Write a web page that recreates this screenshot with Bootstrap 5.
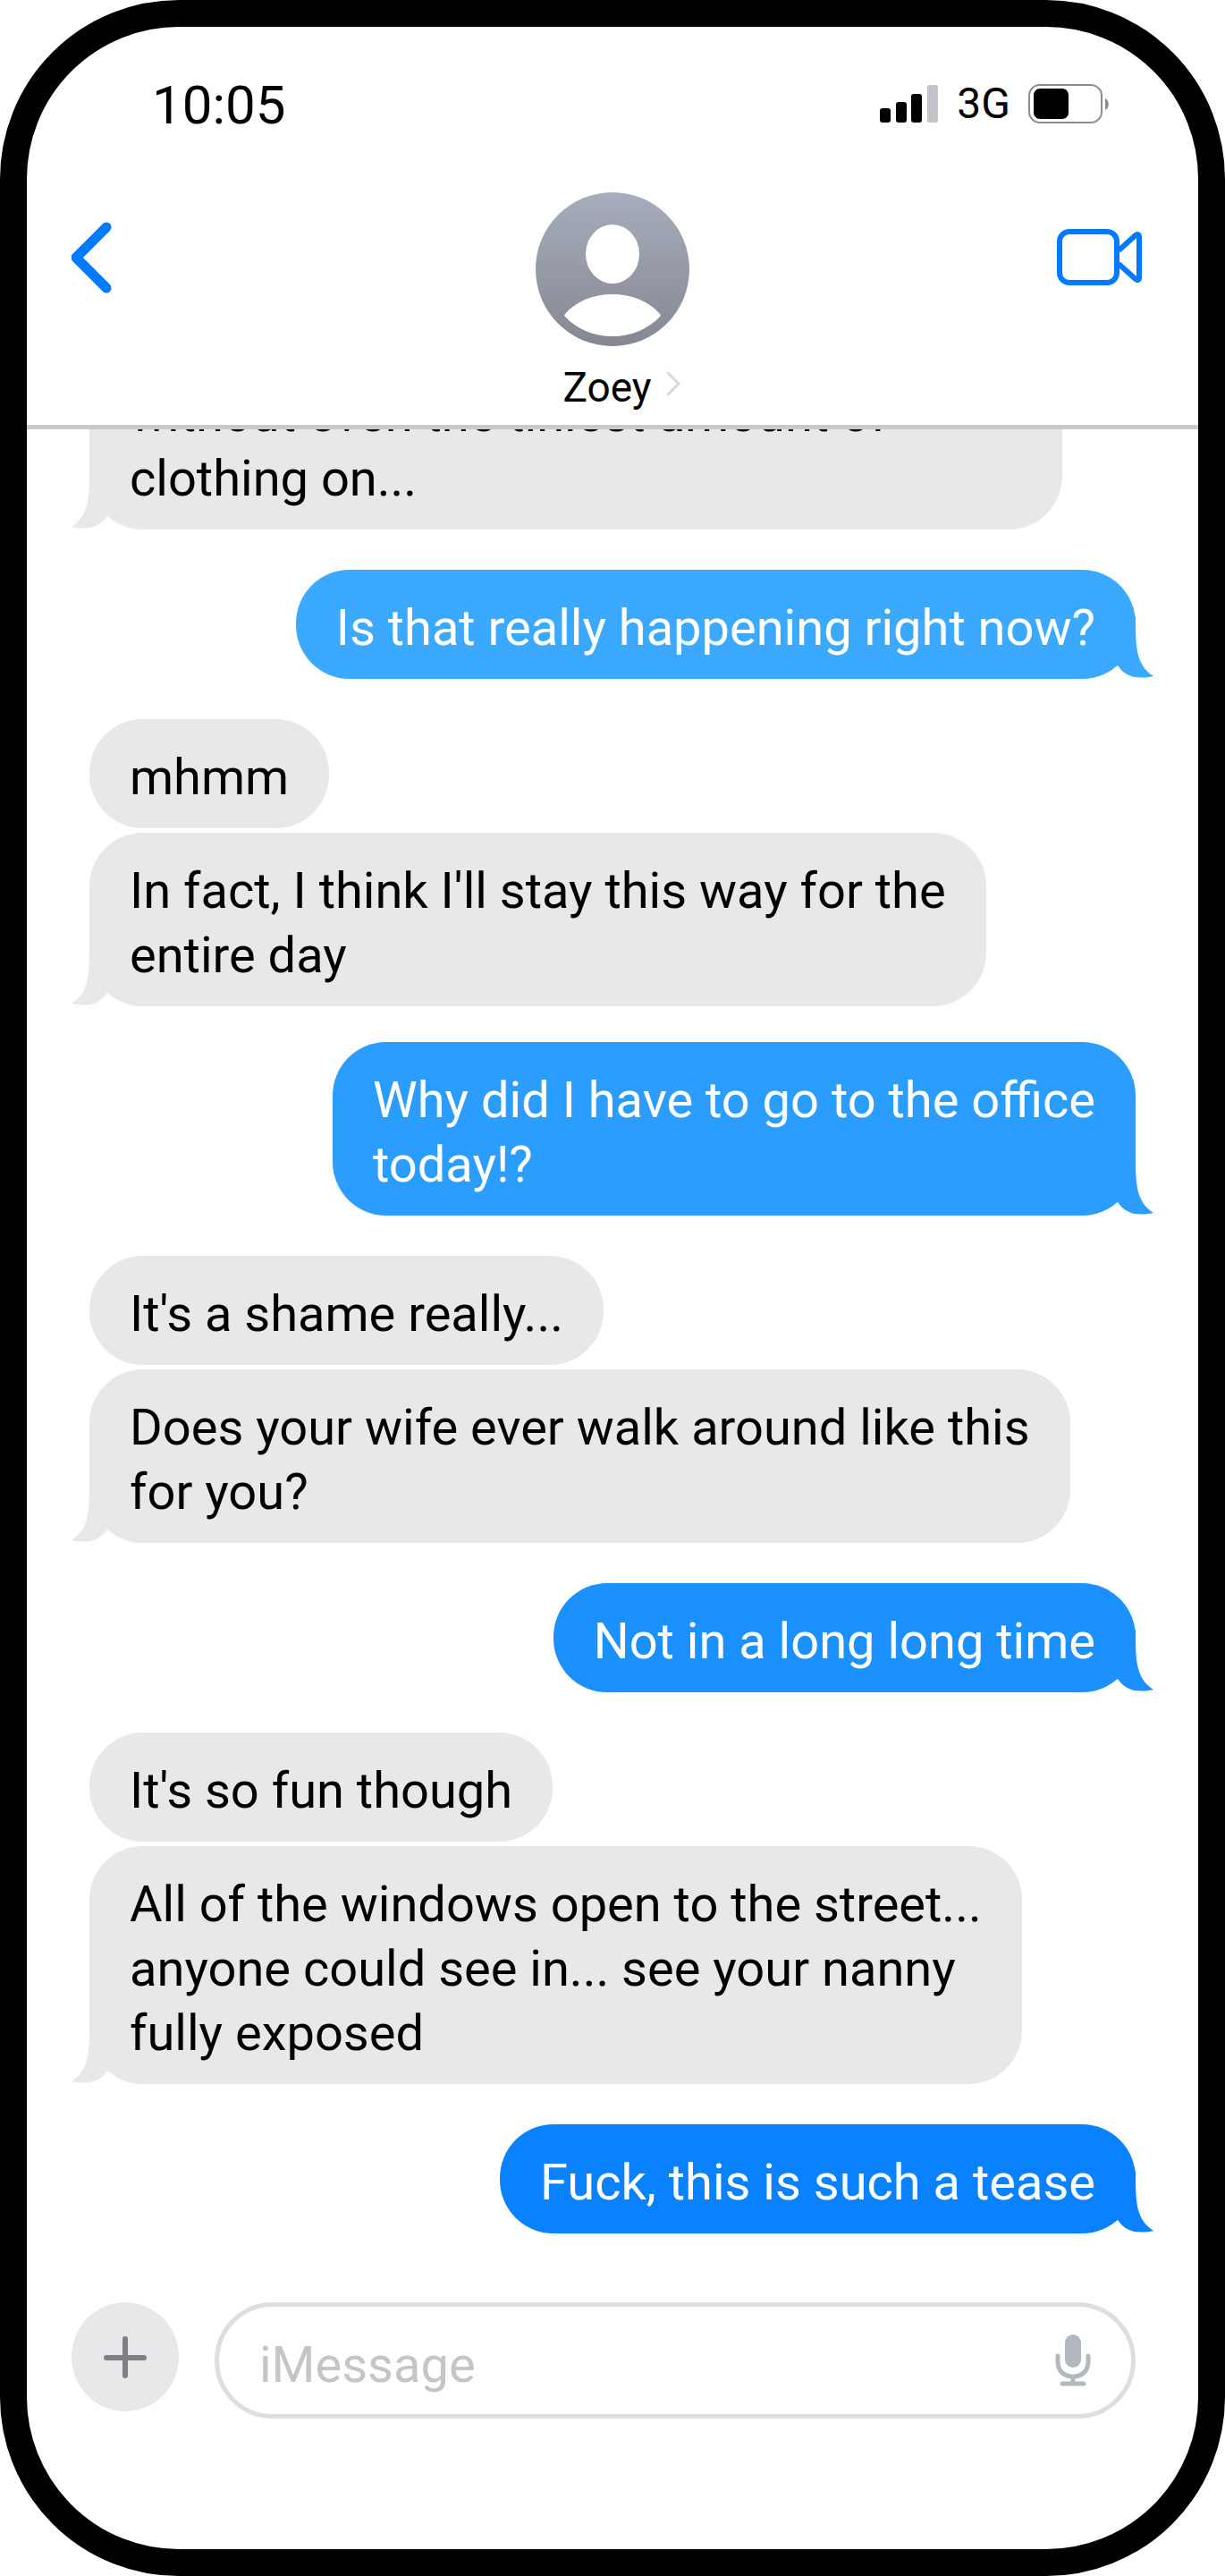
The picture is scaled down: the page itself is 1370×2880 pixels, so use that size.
<!DOCTYPE html>
<html lang="en">
<head>
<meta charset="utf-8">
<meta name="viewport" content="width=device-width, initial-scale=1">
<title>Zoey</title>
<link href="https://cdn.jsdelivr.net/npm/bootstrap@5.3.0/dist/css/bootstrap.min.css" rel="stylesheet">
<style>
  body { font-family: Roboto, "Liberation Sans", sans-serif; color: #000; background: #fff; }
  .phone { height: 100vh; border: 30px solid #000; border-radius: 200px; background: #fff; }
  svg { display: block; }

  .phone-top { padding: 58px 50px 14px; border-bottom: 5px solid #cacaca; }
  .status-row { padding: 0 50px 0 90px; line-height: 60px; }
  .clock { font-size: 60px; }
  .network { font-size: 48px; line-height: 44px; }
  .nav-row { margin-top: 67px; }
  .side-btn { padding: 33px 0 0; }
  .contact-name { margin-top: 18px; padding-left: 20px; font-size: 46px; line-height: 56px; gap: 16px; }

  .thread { min-height: 0; padding: 0 70px 77px; }
  .bubble { position: relative; padding: 29px 45px 21px; border-radius: 60px; font-size: 56px; line-height: 72px; max-width: 95%; flex-shrink: 0; }
  .bubble-in { background: #e8e8ea; align-self: flex-start; }
  .bubble-out { color: #fff; background: var(--shade); align-self: flex-end; }
  .bubble-wide { width: 93%; }
  .bubble + .bubble { margin-top: 45px; }
  .bubble-in + .bubble-in { margin-top: 5px; }
  .bubble-in + .bubble-out.two-line { margin-top: 40px; }
  .shade-1 { --shade: #3aa9ff; }
  .shade-2 { --shade: #2b9dff; }
  .shade-3 { --shade: #1b90ff; }
  .shade-4 { --shade: #0a81ff; }
  .tail { position: absolute; bottom: 0; width: 60px; height: 70px; }
  .bubble-in .tail { left: -20px; transform: scaleX(-1); fill: #e8e8ea; }
  .bubble-out .tail { right: -20px; fill: var(--shade); }

  .composer { padding: 0 70px 146px 50px; gap: 40px; }
  .message-box { height: 130px; border: 5px solid #dedede; border-radius: 65px; padding: 0 44px 0 45px; }
  .message-box input { font-size: 56px; line-height: 72px; padding: 10px 0 0; color: #000; }
  .message-box input::placeholder { color: #c5c5c7; opacity: 1; }
</style>
</head>
<body>
<main class="phone d-flex flex-column overflow-hidden">
  <header class="phone-top flex-shrink-0">
    <div class="status-row d-flex justify-content-between align-items-center">
      <span class="clock">10:05</span>
      <div class="d-flex align-items-center mb-1">
        <svg width="66" height="44" viewBox="0 0 66 44" role="img" aria-label="Signal strength">
          <rect x="0" y="27" width="12" height="16" rx="3"/>
          <rect x="18" y="20" width="12" height="23" rx="3"/>
          <rect x="35" y="11" width="12" height="32" rx="3"/>
          <rect x="53" y="1" width="12" height="42" rx="3" fill="#c4c3c9"/>
        </svg>
        <span class="network mx-3 px-1">3G</span>
        <svg width="90" height="44" viewBox="0 0 90 44" role="img" aria-label="Battery half full">
          <rect x="1" y="1" width="81" height="42" rx="12" fill="none" stroke="#8d8d8d" stroke-width="2"/>
          <rect x="6" y="5" width="39" height="34" rx="7"/>
          <path d="M86 16c5 2 5 11 0 13z" fill="#8d8d8d"/>
        </svg>
      </div>
    </div>
    <div class="nav-row d-flex align-items-start">
      <div class="col">
        <button type="button" class="btn side-btn border-0" aria-label="Back">
          <svg width="46" height="80" viewBox="0 0 46 80" fill="none" stroke="#007aff" stroke-width="11" stroke-linecap="round" stroke-linejoin="round"><path d="M39 6 5 40l34 34"/></svg>
        </button>
      </div>
      <div class="d-flex flex-column align-items-center">
        <svg width="172" height="172" viewBox="0 0 172 172" aria-hidden="true">
          <defs><linearGradient id="grey" x1="0" y1="0" x2="0" y2="1"><stop offset="0" stop-color="#a6adbb"/><stop offset="1" stop-color="#858892"/></linearGradient></defs>
          <circle cx="86" cy="86" r="86" fill="url(#grey)"/>
          <ellipse cx="86" cy="69" rx="30" ry="33" fill="#fff"/>
          <path d="M86 114c22 0 41 8 53 22 1 1 1 2 0 3-13 14-32 22-53 22s-40-8-53-22c-1-1-1-2 0-3 12-14 31-22 53-22z" fill="#fff"/>
        </svg>
        <a href="#" class="contact-name d-flex align-items-center text-decoration-none text-black">Zoey
          <svg width="16" height="28" viewBox="0 0 16 28" fill="none" stroke="#d9d9d9" stroke-width="3" stroke-linecap="round" stroke-linejoin="round" class="mb-2"><path d="M2 2l12 12L2 26"/></svg>
        </a>
      </div>
      <div class="col d-flex justify-content-end">
        <button type="button" class="btn side-btn border-0" aria-label="Video call">
          <svg width="108" height="80" viewBox="0 0 108 80" fill="none" stroke="#007aff" stroke-width="6" stroke-linejoin="round"><rect x="3" y="11" width="64" height="57" rx="11"/><path d="M69 32 88 15c2-2 4-1 4 2v45c0 3-2 4-4 2L69 47"/></svg>
        </button>
      </div>
    </div>
  </header>

  <section class="thread d-flex flex-column justify-content-end flex-grow-1 overflow-hidden" aria-label="Messages">
    <div class="bubble bubble-in bubble-wide">without even the tiniest amount of<br>clothing on...<svg class="tail" viewBox="0 0 60 70"><path d="M40 0C40 34 40 54 60 67 45 70 30 70 20 55V0z"/></svg></div>
    <div class="bubble bubble-out shade-1">Is that really happening right now?<svg class="tail" viewBox="0 0 60 70"><path d="M40 0C40 34 40 54 60 67 45 70 30 70 20 55V0z"/></svg></div>
    <div class="bubble bubble-in">mhmm</div>
    <div class="bubble bubble-in">In fact, I think I'll stay this way for the<br>entire day<svg class="tail" viewBox="0 0 60 70"><path d="M40 0C40 34 40 54 60 67 45 70 30 70 20 55V0z"/></svg></div>
    <div class="bubble bubble-out two-line shade-2">Why did I have to go to the office<br>today!?<svg class="tail" viewBox="0 0 60 70"><path d="M40 0C40 34 40 54 60 67 45 70 30 70 20 55V0z"/></svg></div>
    <div class="bubble bubble-in">It's a shame really...</div>
    <div class="bubble bubble-in">Does your wife ever walk around like this<br>for you?<svg class="tail" viewBox="0 0 60 70"><path d="M40 0C40 34 40 54 60 67 45 70 30 70 20 55V0z"/></svg></div>
    <div class="bubble bubble-out shade-3">Not in a long long time<svg class="tail" viewBox="0 0 60 70"><path d="M40 0C40 34 40 54 60 67 45 70 30 70 20 55V0z"/></svg></div>
    <div class="bubble bubble-in">It's so fun though</div>
    <div class="bubble bubble-in">All of the windows open to the street...<br>anyone could see in... see your nanny<br>fully exposed<svg class="tail" viewBox="0 0 60 70"><path d="M40 0C40 34 40 54 60 67 45 70 30 70 20 55V0z"/></svg></div>
    <div class="bubble bubble-out shade-4">Fuck, this is such a tease<svg class="tail" viewBox="0 0 60 70"><path d="M40 0C40 34 40 54 60 67 45 70 30 70 20 55V0z"/></svg></div>
  </section>

  <form class="composer d-flex align-items-start flex-shrink-0">
    <button type="button" class="btn p-0 border-0 rounded-circle" aria-label="Add attachment">
      <svg width="120" height="122" viewBox="0 0 120 122"><ellipse cx="60" cy="61" rx="60" ry="61" fill="#e6e8ea"/><path d="M60 41v41M39 62h42" stroke="#7f8083" stroke-width="6" stroke-linecap="round"/></svg>
    </button>
    <div class="message-box d-flex align-items-center flex-grow-1">
      <label for="message" class="visually-hidden">Message</label>
      <input id="message" type="text" class="form-control border-0 shadow-none bg-transparent" placeholder="iMessage">
      <button type="button" class="btn p-0 border-0" aria-label="Dictate">
        <svg width="42" height="58" viewBox="0 0 42 58" fill="none" stroke="#b3b7c0" stroke-linecap="round"><rect x="12" y="0" width="18" height="37" rx="9" fill="#b3b7c0" stroke="none"/><path d="M4 24v6c0 11 7 17 17 17s17-6 17-17v-6M21 47v8" stroke-width="5"/><path d="M9 55h24" stroke-width="5"/></svg>
      </button>
    </div>
  </form>
</main>
<script src="https://cdn.jsdelivr.net/npm/bootstrap@5.3.0/dist/js/bootstrap.bundle.min.js"></script>
</body>
</html>
